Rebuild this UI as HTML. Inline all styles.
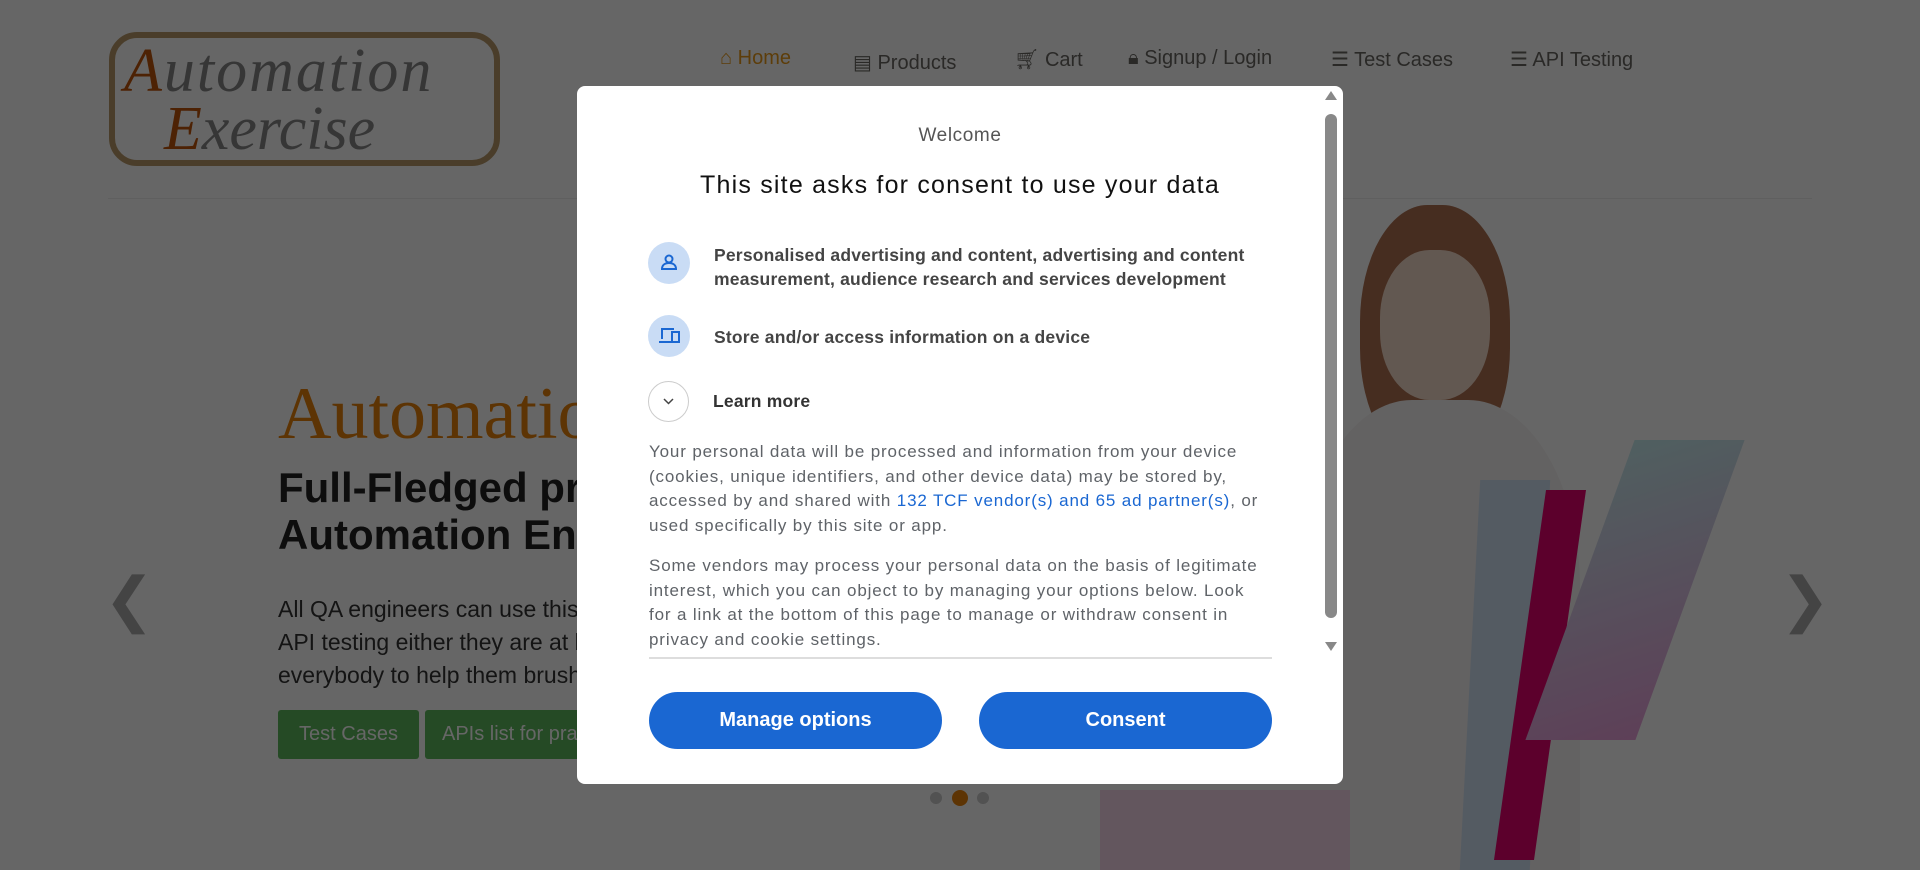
<!DOCTYPE html>
<html style="overflow:hidden;width:1920px;height:870px"><head><meta charset="utf-8"><style>
*{margin:0;padding:0;box-sizing:border-box}
body{width:1920px;height:870px;overflow:hidden;background:#fff;font-family:"Liberation Sans",sans-serif;position:relative}
.abs{position:absolute}
.nav{top:47px;font-size:20px;color:#696763;white-space:nowrap}
.overlay{left:0;top:0;width:1920px;height:870px;background:rgba(0,0,0,.6)}
.modal{left:577px;top:86px;width:766px;height:698px;background:#fff;border-radius:8px}
.m{color:#444;font-size:17.5px;font-weight:bold;letter-spacing:.2px;white-space:nowrap}
.circ{width:42px;height:42px;border-radius:50%;background:#c9dcf5}
.p{color:#5f6368;font-size:17px;line-height:24.5px;white-space:nowrap;letter-spacing:.85px}
.btn{width:293px;height:57px;border-radius:29px;background:#1a67d2;color:#fff;font-weight:bold;font-size:20px;text-align:center;line-height:57px}
.clip{left:0;top:0;width:1920px;height:870px;overflow:hidden}
</style></head><body>
<div class="abs clip">
<!-- logo -->
<div class="abs" style="left:109px;top:32px;width:391px;height:134px;border:6px solid #b89a6a;border-radius:28px;background:#fff"></div>
<div class="abs" style="left:124px;top:36px;font-family:'Liberation Serif',serif;font-style:italic;font-size:62px;color:#888;letter-spacing:2px"><span style="color:#c0560c">A</span>utomation</div>
<div class="abs" style="left:164px;top:94px;font-family:'Liberation Serif',serif;font-style:italic;font-size:62px;color:#888"><span style="color:#c0560c">E</span>xercise</div>
<!-- nav -->
<div class="abs nav" style="left:720px;color:#e89a1a">&#8962; Home</div>
<div class="abs nav" style="left:853px;top:50px">&#9636; Products</div>
<div class="abs nav" style="left:1014px">&#128722;&#xFE0E; Cart</div>
<div class="abs nav" style="left:1128px">&#128274;&#xFE0E; Signup / Login</div>
<div class="abs nav" style="left:1331px">&#9776; Test Cases</div>
<div class="abs nav" style="left:1510px">&#9776; API Testing</div>
<div class="abs nav" style="left:1320px;top:93px">us</div>
<div class="abs" style="left:108px;top:198px;width:1704px;height:1px;background:#eee"></div>
<!-- hero -->
<div class="abs" style="left:278px;top:372px;font-family:'Liberation Serif',serif;font-size:74px;color:#e8820c">Automation</div>
<div class="abs" style="left:278px;top:464px;font-size:42px;font-weight:bold;color:#222;line-height:47px">Full-Fledged practice website for<br>Automation Engineers</div>
<div class="abs" style="left:278px;top:593px;font-size:23px;color:#333;line-height:33px">All QA engineers can use this website for automation practice and<br>API testing either they are at beginner or advance level. This is for<br>everybody to help them brush up their automation skills.</div>
<div class="abs" style="left:278px;top:710px;width:141px;height:49px;background:#5cb85c;border-radius:3px;color:#fff;font-size:20px;text-align:center;line-height:49px">Test Cases</div>
<div class="abs" style="left:425px;top:710px;width:300px;height:49px;background:#5cb85c;border-radius:3px;color:#fff;font-size:20px;line-height:49px;padding-left:17px">APIs list for practice</div>
<div class="abs" style="left:104px;top:565px;font-size:60px;color:#aaa">&#10094;</div>
<div class="abs" style="left:1780px;top:565px;font-size:60px;color:#aaa">&#10095;</div>
<div class="abs" style="left:930px;top:792px;width:12px;height:12px;border-radius:50%;background:#ccc"></div>
<div class="abs" style="left:952px;top:790px;width:16px;height:16px;border-radius:50%;background:#e8820c"></div>
<div class="abs" style="left:977px;top:792px;width:12px;height:12px;border-radius:50%;background:#ccc"></div>
<!-- girl approx -->
<div class="abs" style="left:1360px;top:205px;width:150px;height:260px;border-radius:45%;background:#b07050"></div>
<div class="abs" style="left:1380px;top:250px;width:110px;height:150px;border-radius:45%;background:#f6dccb"></div>
<div class="abs" style="left:1300px;top:400px;width:280px;height:470px;border-radius:40% 40% 0 0;background:#f8f4f4"></div>
<div class="abs" style="left:1100px;top:790px;width:250px;height:80px;background:#f8d8ec"></div>
<div class="abs" style="left:1470px;top:480px;width:70px;height:390px;background:#d3e4f4;transform:skewX(-3deg)"></div>
<div class="abs" style="left:1520px;top:490px;width:40px;height:370px;background:#e6006e;transform:skewX(-8deg)"></div>
<div class="abs" style="left:1580px;top:440px;width:110px;height:300px;background:linear-gradient(160deg,#c8eef0,#eaa0dc);transform:skewX(-20deg)"></div>
<div class="overlay abs"></div>
</div>
<!-- modal -->
<div class="modal abs">
<div class="abs" style="left:0;width:766px;top:39px;text-align:center;font-size:19px;color:#555;letter-spacing:.6px">Welcome</div>
<div class="abs" style="left:0;width:766px;top:85px;text-align:center;font-size:25px;color:#111;letter-spacing:1.2px;white-space:nowrap">This site asks for consent to use your data</div>
<div class="abs circ" style="left:71px;top:156px"><svg width="42" height="42" viewBox="0 0 42 42"><circle cx="21" cy="17" r="3.5" fill="none" stroke="#1a67d2" stroke-width="2"/><path d="M14 27c0-4 3-6 7-6s7 2 7 6z" fill="none" stroke="#1a67d2" stroke-width="2"/></svg></div>
<div class="abs m" style="left:137px;top:157px;line-height:24px">Personalised advertising and content, advertising and content<br>measurement, audience research and services development</div>
<div class="abs circ" style="left:71px;top:229px"><svg width="42" height="42" viewBox="0 0 42 42"><path d="M14 24V14h12M11 27h12" fill="none" stroke="#1a67d2" stroke-width="2"/><rect x="24" y="17" width="7" height="10" fill="none" stroke="#1a67d2" stroke-width="2"/></svg></div>
<div class="abs m" style="left:137px;top:241px">Store and/or access information on a device</div>
<div class="abs" style="left:71px;top:295px;width:41px;height:41px;border-radius:50%;border:1px solid #ccc"><svg width="39" height="39" viewBox="0 0 39 39"><path d="M15 17l4.5 4.5 4.5-4.5" fill="none" stroke="#444" stroke-width="1.5"/></svg></div>
<div class="abs m" style="left:136px;top:305px;color:#333">Learn more</div>
<div class="abs p" style="left:72px;top:354px">Your personal data will be processed and information from your device<br>(cookies, unique identifiers, and other device data) may be stored by,<br>accessed by and shared with <span style="color:#1a67d2">132 TCF vendor(s) and 65 ad partner(s)</span>, or<br>used specifically by this site or app.</div>
<div class="abs p" style="left:72px;top:468px">Some vendors may process your personal data on the basis of legitimate<br>interest, which you can object to by managing your options below. Look<br>for a link at the bottom of this page to manage or withdraw consent in<br>privacy and cookie settings.</div>
<div class="abs" style="left:72px;top:571px;width:623px;height:2px;background:#ddd"></div>
<div class="abs btn" style="left:72px;top:606px">Manage options</div>
<div class="abs btn" style="left:402px;top:606px">Consent</div>
<div class="abs" style="left:748px;top:5px;width:0;height:0;border-left:6px solid transparent;border-right:6px solid transparent;border-bottom:9px solid #888"></div>
<div class="abs" style="left:748px;top:28px;width:12px;height:504px;border-radius:6px;background:#888"></div>
<div class="abs" style="left:748px;top:556px;width:0;height:0;border-left:6px solid transparent;border-right:6px solid transparent;border-top:9px solid #888"></div>
</div>
</body></html>
